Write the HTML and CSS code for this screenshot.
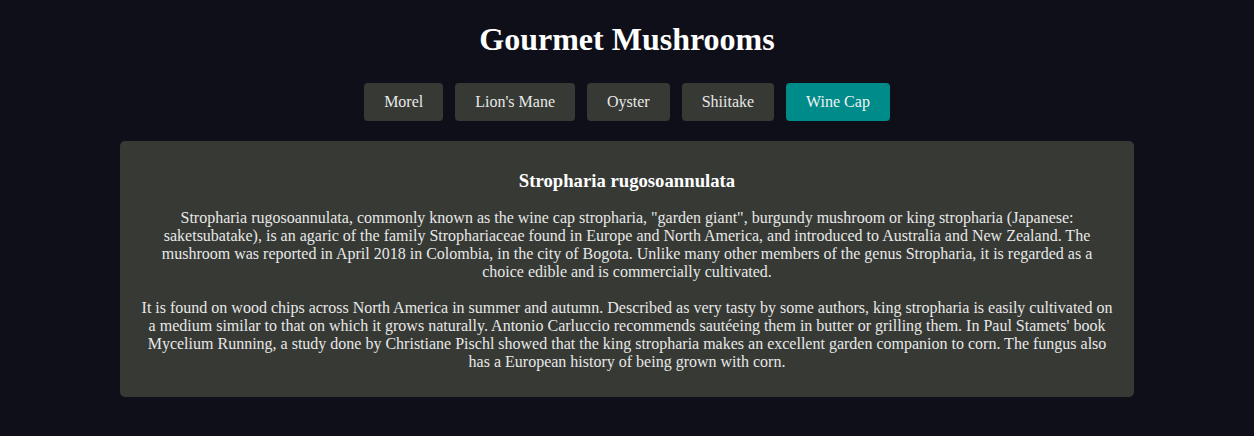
FILE: index.html
```html
<!DOCTYPE html>
<html lang="en">
<head>
<meta charset="utf-8">
<title>Gourmet Mushrooms</title>
<link rel="stylesheet" href="styles.css">
</head>
<body>
<h1 class="title">Gourmet Mushrooms</h1>
<nav class="tabs">
  <button class="tab">Morel</button>
  <button class="tab">Lion's Mane</button>
  <button class="tab">Oyster</button>
  <button class="tab">Shiitake</button>
  <button class="tab active">Wine Cap</button>
</nav>
<section class="card">
  <h3 class="card-title">Stropharia rugosoannulata</h3>
  <p class="card-text">Stropharia rugosoannulata, commonly known as the wine cap stropharia, "garden giant", burgundy mushroom or king stropharia (Japanese: saketsubatake), is an agaric of the family Strophariaceae found in Europe and North America, and introduced to Australia and New Zealand. The mushroom was reported in April 2018 in Colombia, in the city of Bogota. Unlike many other members of the genus Stropharia, it is regarded as a choice edible and is commercially cultivated.</p>
  <p class="card-text">It is found on wood chips across North America in summer and autumn. Described as very tasty by some authors, king stropharia is easily cultivated on a medium similar to that on which it grows naturally. Antonio Carluccio recommends sautéeing them in butter or grilling them. In Paul Stamets' book Mycelium Running, a study done by Christiane Pischl showed that the king stropharia makes an excellent garden companion to corn. The fungus also has a European history of being grown with corn.</p>
</section>
</body>
</html>
```

FILE: styles.css
```css
html, body {
  background: #0f0f19;
}
body {
  margin: 0;
  padding: 0 8px;
  font-family: "Liberation Serif", "Times New Roman", serif;
  color: #e8e8e8;
}
.title {
  font-size: 32px;
  font-weight: bold;
  text-align: center;
  color: #ffffff;
  margin: 0;
  padding: 21px 0 25px;
  line-height: 37px;
}
.tabs {
  display: flex;
  justify-content: center;
  gap: 12px;
  margin-bottom: 20px;
}
.tab {
  font-family: "Liberation Serif", "Times New Roman", serif;
  font-size: 16px;
  color: #e8e8e8;
  background: #363934;
  border: none;
  border-radius: 4px;
  padding: 10px 20px;
  line-height: 18px;
  cursor: pointer;
}
.tab.active {
  background: #008b8b;
  color: #f2f2f2;
}
.card {
  box-sizing: border-box;
  width: 1014px;
  margin: 0 auto;
  background: #363934;
  border-radius: 5px;
  padding: 10px 20px;
  text-align: center;
}
.card-title {
  font-size: 18.72px;
  line-height: 21px;
  font-weight: bold;
  color: #ffffff;
  margin: 18.7px 0;
}
.card-text {
  font-size: 16px;
  line-height: 18px;
  margin: 18px 0 16px;
}
.card-text + .card-text {
  margin-top: 18px;
}
```
